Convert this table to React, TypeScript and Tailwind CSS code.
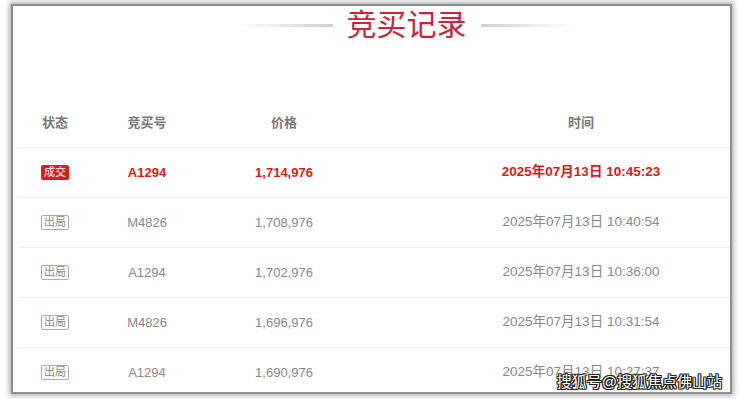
import React from "react";

type Row = { status: "deal" | "out"; code: string; price: string; time: string };

const rows: Row[] = [
  { status: "deal", code: "A1294", price: "1,714,976", time: "2025年07月13日 10:45:23" },
  { status: "out", code: "M4826", price: "1,708,976", time: "2025年07月13日 10:40:54" },
  { status: "out", code: "A1294", price: "1,702,976", time: "2025年07月13日 10:36:00" },
  { status: "out", code: "M4826", price: "1,696,976", time: "2025年07月13日 10:31:54" },
  { status: "out", code: "A1294", price: "1,690,976", time: "2025年07月13日 10:27:37" },
];

const font = "font-['Liberation_Sans','Noto_Sans_CJK_SC',sans-serif]";

function Badge({ deal }: { deal: boolean }) {
  return deal ? (
    <span className="inline-flex h-[15px] w-[28px] items-center justify-center rounded-[2px] bg-[#d81e1e] text-[11px] font-normal leading-none text-white">
      成交
    </span>
  ) : (
    <span className="inline-flex h-[15px] w-[28px] items-center justify-center rounded-[2px] border border-[#aaa] text-[11px] font-normal leading-none text-[#888]">
      出局
    </span>
  );
}

export default function App() {
  return (
    <div className={`relative h-[399px] w-[740px] overflow-hidden bg-white ${font}`}>
      {/* card frame */}
      <div className="ml-[11px] mt-[4px] h-[390px] w-[721px] overflow-hidden border-2 border-[#8c8c8c] bg-white shadow-[0_0_5px_2px_rgba(0,0,0,0.3)]">
        {/* title */}
        <div className="flex h-[34px] items-center justify-center gap-[14px] pl-[70px] pt-[4px]">
          <div className="h-[3px] w-[95px] bg-gradient-to-r from-transparent to-[#cfcfcf]" />
          <div className="text-[30px] leading-[30px] text-[#c9243b]">竞买记录</div>
          <div className="h-[3px] w-[95px] bg-gradient-to-l from-transparent to-[#cfcfcf]" />
        </div>

        {/* table */}
        <div className="ml-[5px] mt-[58px] w-[714px]">
          <div className="grid h-[50px] grid-cols-[74px_110px_164px_1fr] items-center border-b border-[#eee] text-[13px] font-bold text-[#777]">
            <div className="text-center">状态</div>
            <div className="text-center">竞买号</div>
            <div className="text-center">价格</div>
            <div className="pl-[64px] text-center">时间</div>
          </div>
          {rows.map((r, i) => {
            const deal = r.status === "deal";
            return (
              <div
                key={i}
                className={`grid h-[50px] grid-cols-[74px_110px_164px_1fr] items-center border-b border-[#eee] text-[13px] ${
                  deal ? "font-bold text-[#d61a1a]" : "text-[#888]"
                }`}
              >
                <div className="flex justify-center">
                  <Badge deal={deal} />
                </div>
                <div className="text-center">{r.code}</div>
                <div className="text-center">{r.price}</div>
                <div className="whitespace-nowrap pl-[64px] text-center text-[13.5px]">{r.time}</div>
              </div>
            );
          })}
        </div>
      </div>

      {/* watermark */}
      <div className="absolute right-[18px] top-[372px] text-[15px] leading-[19px] text-white [text-shadow:1px_0_0_#222,-1px_0_0_#222,0_1px_0_#222,0_-1px_0_#222,1px_1px_0_#222,-1px_-1px_0_#222,1px_-1px_0_#222,-1px_1px_0_#222]">
        搜狐号@搜狐焦点佛山站
      </div>
    </div>
  );
}
